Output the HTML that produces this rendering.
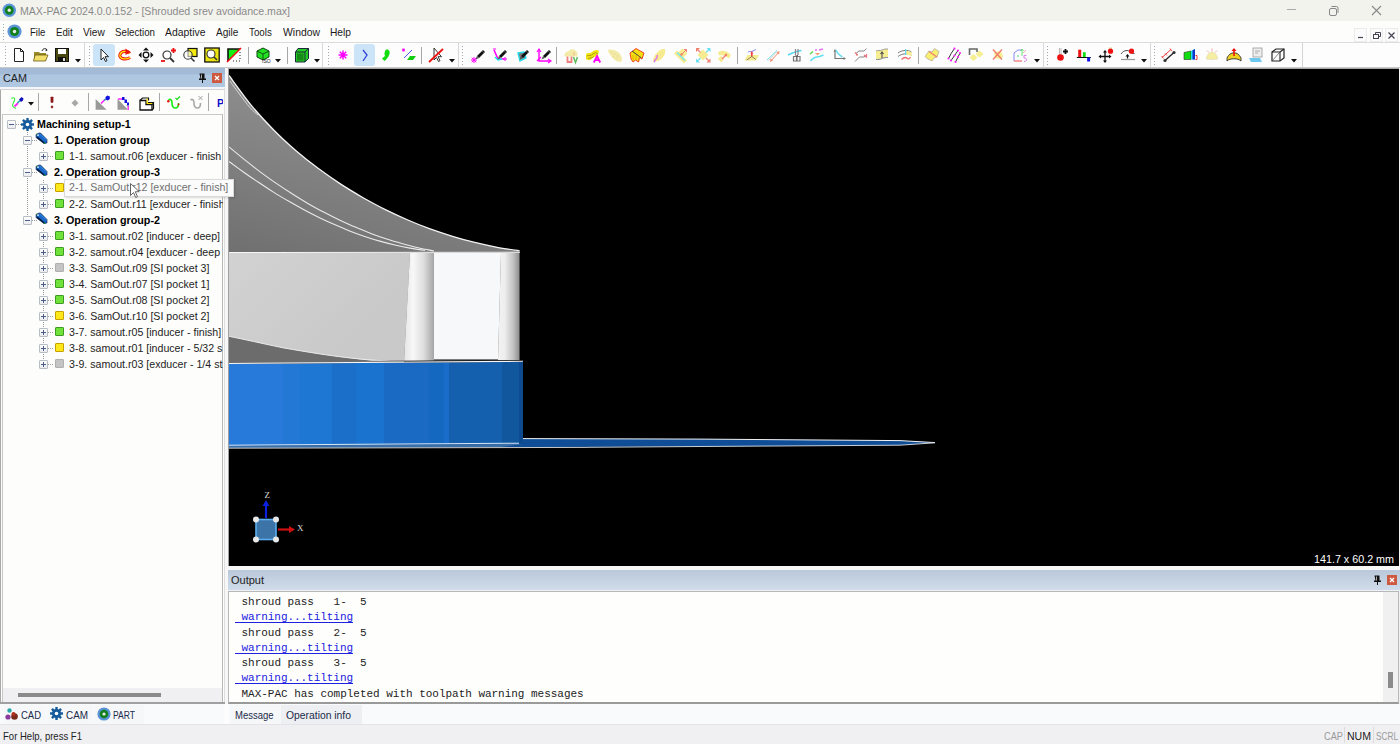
<!DOCTYPE html><html><head><meta charset="utf-8"><style>
*{margin:0;padding:0;box-sizing:border-box}
html,body{width:1400px;height:744px;overflow:hidden;background:#f0f0f2;font-family:"Liberation Sans",sans-serif;font-size:11px;color:#000}
.a{position:absolute}
.t{white-space:pre}
svg{position:absolute;overflow:visible}
</style></head><body>
<div class="a" style="left:0px;top:0px;width:1400px;height:21px;background:#f3f3ee"></div>
<svg style="left:1.5px;top:3px" width="14.5" height="14.5" viewBox="0 0 14 14"><circle cx="7" cy="7" r="6.5" fill="#5a93d8"/><circle cx="7" cy="7" r="4.3" fill="#12801e"/><circle cx="7" cy="7" r="1.6" fill="#e8e8e8"/></svg>
<div class="a t" style="left:20px;top:5.04px;font-size:11px;color:#8a8a8a;font-weight:normal;font-family:'Liberation Sans',sans-serif;letter-spacing:0.000px;line-height:normal;transform:scaleX(0.9607);transform-origin:0 0;">MAX-PAC&#32;2024.0.0.152&#32;-&#32;[Shrouded&#32;srev&#32;avoidance.max]</div>
<svg style="left:1284px;top:4px" width="14" height="14"><line x1="3" y1="5.5" x2="12" y2="5.5" stroke="#aaa" stroke-width="1"/></svg>
<svg style="left:1326px;top:4px" width="14" height="14"><rect x="3.5" y="4.5" width="7" height="7" rx="1.5" fill="none" stroke="#888" stroke-width="1"/><path d="M5.5 2.5h5a1.5 1.5 0 0 1 1.5 1.5v5" fill="none" stroke="#888" stroke-width="1"/></svg>
<svg style="left:1370px;top:4px" width="14" height="14"><path d="M2 2l9 9M11 2l-9 9" stroke="#888" stroke-width="1.1"/></svg>
<div class="a" style="left:0px;top:21px;width:1400px;height:21px;background:#fdfdfc"></div>
<div class="a" style="left:0px;top:42px;width:1400px;height:1px;background:#dcdcdc"></div>
<div class="a" style="left:3px;top:24px;width:1px;height:1px;background:#9aa"></div>
<div class="a" style="left:3px;top:27px;width:1px;height:1px;background:#9aa"></div>
<div class="a" style="left:3px;top:30px;width:1px;height:1px;background:#9aa"></div>
<div class="a" style="left:3px;top:33px;width:1px;height:1px;background:#9aa"></div>
<div class="a" style="left:3px;top:36px;width:1px;height:1px;background:#9aa"></div>
<div class="a" style="left:3px;top:39px;width:1px;height:1px;background:#9aa"></div>
<svg style="left:7px;top:24px" width="15" height="15" viewBox="0 0 14 14"><circle cx="7" cy="7" r="6.6" fill="#5a93d8"/><circle cx="7" cy="7" r="4.3" fill="#12801e"/><circle cx="7" cy="7" r="1.6" fill="#e8e8e8"/></svg>
<div class="a t" style="left:30px;top:26.05px;font-size:11px;color:#1a1a1a;font-weight:normal;font-family:'Liberation Sans',sans-serif;letter-spacing:0.000px;line-height:normal;transform:scaleX(0.8688);transform-origin:0 0;">File</div>
<div class="a t" style="left:55.7px;top:26.05px;font-size:11px;color:#1a1a1a;font-weight:normal;font-family:'Liberation Sans',sans-serif;letter-spacing:0.000px;line-height:normal;transform:scaleX(0.8811);transform-origin:0 0;">Edit</div>
<div class="a t" style="left:83.1px;top:26.05px;font-size:11px;color:#1a1a1a;font-weight:normal;font-family:'Liberation Sans',sans-serif;letter-spacing:0.000px;line-height:normal;transform:scaleX(0.9220);transform-origin:0 0;">View</div>
<div class="a t" style="left:115px;top:26.05px;font-size:11px;color:#1a1a1a;font-weight:normal;font-family:'Liberation Sans',sans-serif;letter-spacing:0.000px;line-height:normal;transform:scaleX(0.8839);transform-origin:0 0;">Selection</div>
<div class="a t" style="left:165.4px;top:26.05px;font-size:11px;color:#1a1a1a;font-weight:normal;font-family:'Liberation Sans',sans-serif;letter-spacing:0.000px;line-height:normal;transform:scaleX(0.9461);transform-origin:0 0;">Adaptive</div>
<div class="a t" style="left:216px;top:26.05px;font-size:11px;color:#1a1a1a;font-weight:normal;font-family:'Liberation Sans',sans-serif;letter-spacing:0.000px;line-height:normal;transform:scaleX(0.9158);transform-origin:0 0;">Agile</div>
<div class="a t" style="left:249px;top:26.05px;font-size:11px;color:#1a1a1a;font-weight:normal;font-family:'Liberation Sans',sans-serif;letter-spacing:0.000px;line-height:normal;transform:scaleX(0.8879);transform-origin:0 0;">Tools</div>
<div class="a t" style="left:283px;top:26.05px;font-size:11px;color:#1a1a1a;font-weight:normal;font-family:'Liberation Sans',sans-serif;letter-spacing:0.000px;line-height:normal;transform:scaleX(0.9457);transform-origin:0 0;">Window</div>
<div class="a t" style="left:330.3px;top:26.05px;font-size:11px;color:#1a1a1a;font-weight:normal;font-family:'Liberation Sans',sans-serif;letter-spacing:0.000px;line-height:normal;transform:scaleX(0.9283);transform-origin:0 0;">Help</div>
<div class="a" style="left:1354px;top:28px;width:13px;height:14px;background:#fbfbfb;border:1px solid #ececec"></div>
<div class="a" style="left:1370px;top:28px;width:13px;height:14px;background:#fbfbfb;border:1px solid #ececec"></div>
<div class="a" style="left:1385px;top:28px;width:13px;height:14px;background:#fbfbfb;border:1px solid #ececec"></div>
<svg style="left:1354px;top:28px" width="13" height="14"><line x1="4" y1="9.5" x2="9" y2="9.5" stroke="#445" stroke-width="1.2"/></svg>
<svg style="left:1370px;top:28px" width="13" height="14"><rect x="3.5" y="6.5" width="5" height="4" fill="none" stroke="#445"/><path d="M5.5 6.5v-2h5v4h-2" fill="none" stroke="#445"/></svg>
<svg style="left:1385px;top:28px" width="13" height="14"><path d="M3.5 4.5l6 6M9.5 4.5l-6 6" stroke="#445" stroke-width="1.2"/></svg>
<div class="a" style="left:0px;top:43px;width:1400px;height:25px;background:#fdfdfd"></div>
<div class="a" style="left:0px;top:67px;width:1400px;height:1px;background:#c8c8c8"></div>
<div class="a" style="left:5px;top:46px;width:1px;height:1px;background:#a0a8b0"></div><div class="a" style="left:5px;top:49px;width:1px;height:1px;background:#a0a8b0"></div><div class="a" style="left:5px;top:52px;width:1px;height:1px;background:#a0a8b0"></div><div class="a" style="left:5px;top:55px;width:1px;height:1px;background:#a0a8b0"></div><div class="a" style="left:5px;top:58px;width:1px;height:1px;background:#a0a8b0"></div><div class="a" style="left:5px;top:61px;width:1px;height:1px;background:#a0a8b0"></div><div class="a" style="left:5px;top:64px;width:1px;height:1px;background:#a0a8b0"></div><div class="a" style="left:84px;top:43px;width:1px;height:24px;background:#d8d8d8"></div><div class="a" style="left:89px;top:46px;width:1px;height:1px;background:#a0a8b0"></div><div class="a" style="left:89px;top:49px;width:1px;height:1px;background:#a0a8b0"></div><div class="a" style="left:89px;top:52px;width:1px;height:1px;background:#a0a8b0"></div><div class="a" style="left:89px;top:55px;width:1px;height:1px;background:#a0a8b0"></div><div class="a" style="left:89px;top:58px;width:1px;height:1px;background:#a0a8b0"></div><div class="a" style="left:89px;top:61px;width:1px;height:1px;background:#a0a8b0"></div><div class="a" style="left:89px;top:64px;width:1px;height:1px;background:#a0a8b0"></div><div class="a" style="left:92.5px;top:44px;width:22.5px;height:22px;background:#cce4f7;border-radius:3px"></div><div class="a" style="left:354px;top:44px;width:21px;height:22px;background:#cce4f7;border-radius:3px"></div><div class="a" style="left:247.5px;top:47px;width:1px;height:17px;background:#a6a6a6"></div><div class="a" style="left:287px;top:47px;width:1px;height:17px;background:#a6a6a6"></div><div class="a" style="left:322px;top:43px;width:1px;height:24px;background:#d8d8d8"></div><div class="a" style="left:328px;top:46px;width:1px;height:1px;background:#a0a8b0"></div><div class="a" style="left:328px;top:49px;width:1px;height:1px;background:#a0a8b0"></div><div class="a" style="left:328px;top:52px;width:1px;height:1px;background:#a0a8b0"></div><div class="a" style="left:328px;top:55px;width:1px;height:1px;background:#a0a8b0"></div><div class="a" style="left:328px;top:58px;width:1px;height:1px;background:#a0a8b0"></div><div class="a" style="left:328px;top:61px;width:1px;height:1px;background:#a0a8b0"></div><div class="a" style="left:328px;top:64px;width:1px;height:1px;background:#a0a8b0"></div><div class="a" style="left:421px;top:47px;width:1px;height:17px;background:#a6a6a6"></div><div class="a" style="left:458px;top:43px;width:1px;height:24px;background:#d8d8d8"></div><div class="a" style="left:462px;top:46px;width:1px;height:1px;background:#a0a8b0"></div><div class="a" style="left:462px;top:49px;width:1px;height:1px;background:#a0a8b0"></div><div class="a" style="left:462px;top:52px;width:1px;height:1px;background:#a0a8b0"></div><div class="a" style="left:462px;top:55px;width:1px;height:1px;background:#a0a8b0"></div><div class="a" style="left:462px;top:58px;width:1px;height:1px;background:#a0a8b0"></div><div class="a" style="left:462px;top:61px;width:1px;height:1px;background:#a0a8b0"></div><div class="a" style="left:462px;top:64px;width:1px;height:1px;background:#a0a8b0"></div><div class="a" style="left:556px;top:47px;width:1px;height:17px;background:#a6a6a6"></div><div class="a" style="left:737px;top:47px;width:1px;height:17px;background:#a6a6a6"></div><div class="a" style="left:917.5px;top:47px;width:1px;height:17px;background:#a6a6a6"></div><div class="a" style="left:1043px;top:43px;width:1px;height:24px;background:#d8d8d8"></div><div class="a" style="left:1047px;top:46px;width:1px;height:1px;background:#a0a8b0"></div><div class="a" style="left:1047px;top:49px;width:1px;height:1px;background:#a0a8b0"></div><div class="a" style="left:1047px;top:52px;width:1px;height:1px;background:#a0a8b0"></div><div class="a" style="left:1047px;top:55px;width:1px;height:1px;background:#a0a8b0"></div><div class="a" style="left:1047px;top:58px;width:1px;height:1px;background:#a0a8b0"></div><div class="a" style="left:1047px;top:61px;width:1px;height:1px;background:#a0a8b0"></div><div class="a" style="left:1047px;top:64px;width:1px;height:1px;background:#a0a8b0"></div><div class="a" style="left:1150px;top:43px;width:1px;height:24px;background:#d8d8d8"></div><div class="a" style="left:1154px;top:46px;width:1px;height:1px;background:#a0a8b0"></div><div class="a" style="left:1154px;top:49px;width:1px;height:1px;background:#a0a8b0"></div><div class="a" style="left:1154px;top:52px;width:1px;height:1px;background:#a0a8b0"></div><div class="a" style="left:1154px;top:55px;width:1px;height:1px;background:#a0a8b0"></div><div class="a" style="left:1154px;top:58px;width:1px;height:1px;background:#a0a8b0"></div><div class="a" style="left:1154px;top:61px;width:1px;height:1px;background:#a0a8b0"></div><div class="a" style="left:1154px;top:64px;width:1px;height:1px;background:#a0a8b0"></div><div class="a" style="left:1302px;top:43px;width:1px;height:24px;background:#d4d4d4"></div><svg style="left:75px;top:59px" width="6" height="4"><path d="M0 0h6l-3 3.5z" fill="#111"/></svg><svg style="left:275px;top:59px" width="6" height="4"><path d="M0 0h6l-3 3.5z" fill="#111"/></svg><svg style="left:314px;top:59px" width="6" height="4"><path d="M0 0h6l-3 3.5z" fill="#111"/></svg><svg style="left:449px;top:59px" width="6" height="4"><path d="M0 0h6l-3 3.5z" fill="#111"/></svg><svg style="left:1034px;top:59px" width="6" height="4"><path d="M0 0h6l-3 3.5z" fill="#111"/></svg><svg style="left:1141px;top:59px" width="6" height="4"><path d="M0 0h6l-3 3.5z" fill="#111"/></svg><svg style="left:1291px;top:59px" width="6" height="4"><path d="M0 0h6l-3 3.5z" fill="#111"/></svg><svg style="left:11.0px;top:47.0px" width="16" height="16" viewBox="0 0 16 16"><path d="M3.5 1.5h6l3 3v10h-9z" fill="#fff" stroke="#222" stroke-width="1"/><path d="M9.5 1.5v3h3" fill="none" stroke="#222"/></svg><svg style="left:32.5px;top:47.0px" width="16" height="16" viewBox="0 0 16 16"><path d="M1 5h5l1 1h6v8H1z" fill="#9a8a2a"/><path d="M2 8h13l-2.5 6H0.5z" fill="#f2de6a" stroke="#6a5a10" stroke-width="0.8"/><path d="M9 4c1-3 4-3 5-1" fill="none" stroke="#222" stroke-width="1"/><path d="M13 1.5l1.5 2-2 0.8z" fill="#222"/></svg><svg style="left:54.0px;top:47.0px" width="16" height="16" viewBox="0 0 16 16"><rect x="1.5" y="1.5" width="13" height="13" fill="#4a4a10" stroke="#111"/><rect x="4" y="2" width="8" height="5" fill="#fff"/><rect x="4" y="10" width="8" height="4.5" fill="#111"/><rect x="9" y="11" width="2" height="3" fill="#ddd"/></svg><svg style="left:96.0px;top:47.0px" width="16" height="16" viewBox="0 0 16 16"><path d="M5 2v11l2.5-2.5 2 4 1.5-0.8-2-4h3.5z" fill="#fff" stroke="#222" stroke-width="1"/></svg><svg style="left:117.0px;top:47.0px" width="16" height="16" viewBox="0 0 16 16"><path d="M12.5 6.5C11 3.5 4.5 3.5 3 7.5S8.5 13.5 13 10.5" fill="none" stroke="#ee1111" stroke-width="3.2"/><path d="M12.5 6.5C11 3.5 4.5 3.5 3 7.5S8.5 13.5 13 10.5" fill="none" stroke="#ffee00" stroke-width="1.2"/><path d="M8.5 1.5l5 3.5-5 3z" fill="#ee1111"/></svg><svg style="left:138.0px;top:47.0px" width="16" height="16" viewBox="0 0 16 16"><path d="M8 0.5l3 3h-6zM8 15.5l3-3h-6zM0.5 8l3-3v6zM15.5 8l-3-3v6z" fill="#111"/><circle cx="8" cy="8" r="2.8" fill="#fff" stroke="#111" stroke-width="1.3"/></svg><svg style="left:160.0px;top:47.0px" width="16" height="16" viewBox="0 0 16 16"><circle cx="7" cy="8" r="4" fill="#fff" stroke="#333" stroke-width="1.2"/><path d="M10 11l4 4" stroke="#333" stroke-width="1.8"/><path d="M11 3.5h5M13.5 1v5" stroke="#e11" stroke-width="1.8"/><path d="M1 14h4" stroke="#e11" stroke-width="1.8"/></svg><svg style="left:182.0px;top:47.0px" width="16" height="16" viewBox="0 0 16 16"><rect x="6" y="1.5" width="9" height="8" fill="#f2ea10" stroke="#111" stroke-width="1.2"/><circle cx="6" cy="8" r="4.2" fill="#fff" fill-opacity="0.6" stroke="#333" stroke-width="1.1"/><path d="M9 11l3.5 3.5" stroke="#333" stroke-width="1.6"/></svg><svg style="left:204.0px;top:47.0px" width="16" height="16" viewBox="0 0 16 16"><rect x="0.8" y="1" width="14.4" height="14" fill="#ece410" stroke="#111" stroke-width="1.3"/><circle cx="7" cy="7" r="4" fill="#fff" stroke="#333" stroke-width="1.1"/><path d="M10 10l3 3" stroke="#333" stroke-width="1.6"/></svg><svg style="left:226.0px;top:47.0px" width="16" height="16" viewBox="0 0 16 16"><path d="M2 2h12L2 14z" fill="#11ee11"/><path d="M2 14V2h12" fill="none" stroke="#111" stroke-width="1.6"/><path d="M1 15L15 1" stroke="#ee1111" stroke-width="1.6"/><path d="M14 5v9H5" fill="none" stroke="#222" stroke-width="1" stroke-dasharray="1 2"/></svg><svg style="left:255.0px;top:47.0px" width="16" height="16" viewBox="0 0 16 16"><path d="M8 1l6 3v6l-6 3-6-3V4z" fill="#22e022" stroke="#114411" stroke-width="1"/><path d="M2 4l6 3 6-3M8 7v6" fill="none" stroke="#114411" stroke-width="0.9"/><text x="7" y="16" font-size="5" font-family="Liberation Sans" fill="#222">ISO</text></svg><svg style="left:294.0px;top:47.0px" width="16" height="16" viewBox="0 0 16 16"><path d="M4 1.5h10.5v10l-3.5 3.5H1.5V5z" fill="#22cc22" stroke="#1a2a3a" stroke-width="1"/><path d="M1.5 5h9.5v10M11 5l3.5-3.5" fill="none" stroke="#1a2a3a" stroke-width="1"/><rect x="3" y="6.5" width="6.5" height="7" fill="#188a18"/></svg><svg style="left:334.5px;top:47.0px" width="16" height="16" viewBox="0 0 16 16"><path d="M8 3.5v9M3.5 8h9M4.8 4.8l6.4 6.4M11.2 4.8l-6.4 6.4" stroke="#f0f" stroke-width="1.5"/></svg><svg style="left:357.0px;top:47.0px" width="16" height="16" viewBox="0 0 16 16"><path d="M6 3l4 5-4 6" fill="none" stroke="#3344dd" stroke-width="1.3"/></svg><svg style="left:377.5px;top:47.0px" width="16" height="16" viewBox="0 0 16 16"><path d="M8 2.5c2.5-0.5 4.5 1.5 3.5 4.5s-3 5.5-5 7l-2.5-2.5c1-1 2-1.5 3-2.5-1-1.5-0.5-5 1-6.5z" fill="#11dd11"/></svg><svg style="left:400.0px;top:47.0px" width="16" height="16" viewBox="0 0 16 16"><path d="M2 3h3M3.5 1.5v3M2 1.8l3 2.4M5 1.8l-3 2.4" stroke="#f0f" stroke-width="0.9"/><path d="M4 11L12 3" stroke="#4455ee" stroke-width="1"/><path d="M7 13l3-4h6l-3 4z" fill="#11cc11"/></svg><svg style="left:428.0px;top:47.0px" width="16" height="16" viewBox="0 0 16 16"><path d="M6 1v12l2.5-2.5 2 4 1.5-0.8-2-4h3.5z" fill="#fff" stroke="#333" stroke-width="1"/><path d="M1 15L15 2" stroke="#ee1111" stroke-width="1.8"/></svg><svg style="left:470.0px;top:47.0px" width="16" height="16" viewBox="0 0 16 16"><path d="M1 13h6M4 10v6M1.8 10.8l4.4 4.4M6.2 10.8l-4.4 4.4" stroke="#f0f" stroke-width="1"/><path d="M7 9l6-6 2 2-6 6z" fill="#111"/><path d="M7 9l-1.5 3.5L9 11z" fill="#555"/><path d="M12 4l2 2" stroke="#777" stroke-width="0.6"/></svg><svg style="left:492.0px;top:47.0px" width="16" height="16" viewBox="0 0 16 16"><path d="M2 3l4 9h6" fill="none" stroke="#f0f" stroke-width="1.6"/><path d="M3 10l3 3 4-1" fill="none" stroke="#1ee" stroke-width="1.4"/><path d="M1 2h3M11 12h4M13 10v4" stroke="#f0f" stroke-width="1"/><path d="M7 9l6-6 2 2-6 6z" fill="#111"/><path d="M7 9l-1.5 3.5L9 11z" fill="#555"/><path d="M12 4l2 2" stroke="#777" stroke-width="0.6"/></svg><svg style="left:513.5px;top:47.0px" width="16" height="16" viewBox="0 0 16 16"><path d="M4 6l6-1 2 6-6 3z" fill="#7a7a7a" stroke="#22dded" stroke-width="1.4"/><path d="M7 9l6-6 2 2-6 6z" fill="#111"/><path d="M7 9l-1.5 3.5L9 11z" fill="#555"/><path d="M12 4l2 2" stroke="#777" stroke-width="0.6"/></svg><svg style="left:536.0px;top:47.0px" width="16" height="16" viewBox="0 0 16 16"><path d="M3 3v11h11" fill="none" stroke="#f0f" stroke-width="1.4"/><path d="M1 5l2-3 2 3M12 12l3 2-3 2M1 14l4-4" fill="none" stroke="#f0f" stroke-width="1.2"/><path d="M7 9l6-6 2 2-6 6z" fill="#111"/><path d="M7 9l-1.5 3.5L9 11z" fill="#555"/><path d="M12 4l2 2" stroke="#777" stroke-width="0.6"/></svg><svg style="left:562.5px;top:47.0px" width="16" height="16" viewBox="0 0 16 16"><path d="M1.5 9.5c-0.5-3 1.5-5 4-5 1-2.5 5-3 7-1 2 1 2.5 4 1.5 6z" fill="#f4eaa8"/><path d="M10 5.5l2 1.5-2 1.5" fill="none" stroke="#f0a090" stroke-width="0.7"/><path d="M4.5 9.5v5.5h4v-5.5" fill="none" stroke="#f08080" stroke-width="1.8"/><path d="M10.5 10l2 5.5 2-5.5" fill="none" stroke="#60c060" stroke-width="1.5"/></svg><svg style="left:584.5px;top:47.0px" width="16" height="16" viewBox="0 0 16 16"><path d="M1 7c2-2 4 0 6-2s5-3 7-1l-1.5 6c-2-1-4 0-6 2s-4 1-5.5 0z" fill="#f2e414"/><path d="M2 9c2-1 4 0 6-2s4-1 5 0M3 11.5c2-1 4 0 6-2" fill="none" stroke="#8a7a10" stroke-width="0.7"/><path d="M8.8 15.5l3.2-6.5 3.2 6.5M10.2 13.2h3.6" fill="none" stroke="#f0f" stroke-width="1.8"/></svg><svg style="left:606.5px;top:47.0px" width="16" height="16" viewBox="0 0 16 16"><path d="M1 3c3-1 7 0 10 2s4 5 4 8l-1 2c-4 0-8-3-10-6S1 5 1 3z" fill="#f4eaa8"/><path d="M4 5l1 1M7 6l1 2M10 8l1 2M6 9l1 1M9 11l1 1" stroke="#e2d690" stroke-width="0.9"/></svg><svg style="left:628.5px;top:47.0px" width="16" height="16" viewBox="0 0 16 16"><path d="M1 6L7 1.5L15 6L13 12L10.5 10.5L9.5 15L6.5 13L4 15L2 12Z" fill="#f4de10" stroke="#ee3020" stroke-width="0.9"/><path d="M3 4l9.5 7" stroke="#444" stroke-width="1"/><path d="M4 8v6M7 8v5M10 9v5" stroke="#e0a010" stroke-width="0.8"/></svg><svg style="left:650.5px;top:47.0px" width="16" height="16" viewBox="0 0 16 16"><path d="M2 14.5c0-5 4-10 9-12.5h3c1 4-1 9-6 11.5l-5 1.5z" fill="#f6eb90"/><path d="M6.5 8c-1 2 0 3-1.5 4s-1 2-2 3" fill="none" stroke="#e070f0" stroke-width="1.4"/></svg><svg style="left:672.5px;top:47.0px" width="16" height="16" viewBox="0 0 16 16"><path d="M1 6.5l3-3 10 10-3 3z" fill="#f6eb90"/><path d="M9.5 1.5l5 5-4.5 4-5-5z" fill="#f6eb90"/><path d="M4 5.5l8 8" stroke="#6ee8f0" stroke-width="1.3"/><path d="M8.5 7.5l5-5M11 2.5h2.5v2.5" fill="none" stroke="#f08070" stroke-width="1"/><circle cx="8.5" cy="7.5" r="1.2" fill="#f08060"/></svg><svg style="left:694.5px;top:47.0px" width="16" height="16" viewBox="0 0 16 16"><path d="M8 2.5l5.5 5.5-5.5 5.5-5.5-5.5z" fill="#f6eb90"/><path d="M2 2l3.5 3.5M14.5 14.5L11 11" stroke="#f08070" stroke-width="1.2"/><path d="M1 1h4l-4 4zM15.5 15.5h-4l4-4z" fill="#f08070"/><path d="M14.5 2L11 5.5M2 14.5L5.5 11" stroke="#6ee0f0" stroke-width="1.2"/><path d="M15.5 1h-4l4 4zM1 15.5h4l-4-4z" fill="#6ee0f0"/></svg><svg style="left:716.5px;top:47.0px" width="16" height="16" viewBox="0 0 16 16"><path d="M1 5.5c3-3 9-2.5 13 2.5l-2 3.5c-3-3-7-4-10-3z" fill="#f6eb90"/><path d="M1 11.5l3-2.5 3 3-3 3.5z" fill="#f6eb90"/><path d="M5 12l4-4" stroke="#f08070" stroke-width="1.4"/><circle cx="9" cy="8" r="1.3" fill="#f08070"/></svg><svg style="left:742.5px;top:47.0px" width="16" height="16" viewBox="0 0 16 16"><path d="M1.5 13.5l3-5.5h11.5l-3 5.5z" fill="#f4ec90"/><path d="M5 5c2-1 3 0 5-1s2-1 3-1.5" fill="none" stroke="#8080f0" stroke-width="1"/><path d="M8.8 9.5V6" stroke="#f04040" stroke-width="1.6"/><path d="M7.3 6.5l1.5-2.5 1.5 2.5z" fill="#f04040"/><path d="M8.8 9.5l-5 3.5M8.8 9.5l4 3" stroke="#806050" stroke-width="0.8"/></svg><svg style="left:765.0px;top:47.0px" width="16" height="16" viewBox="0 0 16 16"><path d="M2 13L12 3.5" stroke="#70e0f0" stroke-width="1"/><path d="M3.5 13.5l9-9.5" stroke="#c8c8c8" stroke-width="0.8"/><path d="M6 14L13.8 5.2" stroke="#f09070" stroke-width="1"/><path d="M14.5 4l-0.5 3.5-2.5-2z" fill="#f09070"/><path d="M5 15l0.5-3.5 2.5 2z" fill="#f09070"/></svg><svg style="left:787.0px;top:47.0px" width="16" height="16" viewBox="0 0 16 16"><path d="M1 8c4-2 8-4 13.5-4.5" fill="none" stroke="#50d8f0" stroke-width="1.5"/><path d="M8.5 2v6M11 2v6" stroke="#888" stroke-width="1.2"/><path d="M6.5 9.5h3v4.5h-3zM10 9.5h3v4.5h-3z" fill="none" stroke="#777" stroke-width="1.2"/><path d="M8.5 8l2 2M11 8l-2 2" stroke="#555" stroke-width="1"/></svg><svg style="left:809.0px;top:47.0px" width="16" height="16" viewBox="0 0 16 16"><path d="M1.5 14c2-2 3-4 6-4s5-1 7-2" fill="none" stroke="#60e0f0" stroke-width="1.6"/><path d="M1 7l3-2.5" stroke="#50d850" stroke-width="1.4"/><path d="M6 3h2M10 3l4-1" stroke="#e070f0" stroke-width="1.5"/><path d="M6 6h5l-2.5 2.5z" fill="#f0a070"/></svg><svg style="left:831.0px;top:47.0px" width="16" height="16" viewBox="0 0 16 16"><path d="M4 3v8.5h9.5" fill="none" stroke="#777" stroke-width="1.2"/><path d="M2.5 4.5L4 2l1.5 2.5zM12.5 10l2.5 1.5-2.5 1.5z" fill="#777"/><path d="M5 3c1 3 3 5 6.5 7" fill="none" stroke="#70e0f0" stroke-width="1.6"/></svg><svg style="left:853.0px;top:47.0px" width="16" height="16" viewBox="0 0 16 16"><path d="M3 6.5L6 4h5l2.5-2.5M2 14.5L6.5 10h4.5l2-1.5" fill="none" stroke="#777" stroke-width="0.9"/><path d="M2 5.5l2.5 2.5M3 8h2" stroke="#f07070" stroke-width="1.2"/><path d="M11 8l3 2.5M13.5 7v3.5" stroke="#f07080" stroke-width="1.2"/></svg><svg style="left:875.0px;top:47.0px" width="16" height="16" viewBox="0 0 16 16"><path d="M1 4c2-1 4 0 6-1s4-1 6-1v9c-2 0-4 0-6 1s-4 1-6 1z" fill="#f6ee90"/><path d="M1 4c2-1 4 0 6-1s4-1 6-1" fill="none" stroke="#888" stroke-width="0.8"/><path d="M1 12.5c2 0 4 0 6-1s4-1 6-1" fill="none" stroke="#6a70a0" stroke-width="0.8"/><path d="M7 11V5.5M5.5 7L7 5l1.5 2" fill="none" stroke="#555" stroke-width="1.1"/></svg><svg style="left:897.0px;top:47.0px" width="16" height="16" viewBox="0 0 16 16"><path d="M1 6c4-3 10-3.5 13.5-1M1 9.5c4-3 9-3.5 13.5-1.5" fill="none" stroke="#666" stroke-width="0.9"/><path d="M9 3.5l5.5 1.5v4L9 7.5z" fill="#f6ee90"/><path d="M8.7 2v6" stroke="#60d8f0" stroke-width="1.2"/><path d="M4.5 12.5c2-2 4-3 6-1 1 1 2 0 3-1.5" fill="none" stroke="#f07070" stroke-width="1.3"/></svg><svg style="left:924.0px;top:47.0px" width="16" height="16" viewBox="0 0 16 16"><path d="M1 9.5l4-5.5 3 1 2.5-3.5 4.5 3-2 5.5-3 1-2 3-4-2z" fill="#f8ee70" stroke="#999" stroke-width="0.6"/><path d="M5 4.5l8 5.5" stroke="#f08070" stroke-width="1.3"/></svg><svg style="left:947.0px;top:47.0px" width="16" height="16" viewBox="0 0 16 16"><path d="M1.5 11.5Q4 6 7.5 1.5M4 13.5Q8 8 11 3.5M8.5 15Q10.5 11 13 6" fill="none" stroke="#333" stroke-width="1"/><g fill="#ff22ff"><circle cx="1.5" cy="11.5" r="1.1"/><circle cx="7.5" cy="1.5" r="1.1"/><circle cx="4" cy="13.5" r="1.1"/><circle cx="7.5" cy="8.5" r="1.1"/><circle cx="11" cy="3.5" r="1.1"/><circle cx="8.5" cy="15" r="1.1"/><circle cx="11" cy="10" r="1.1"/><circle cx="13" cy="6" r="1.1"/></g></svg><svg style="left:968.0px;top:47.0px" width="16" height="16" viewBox="0 0 16 16"><path d="M1.5 8V2h7.5v3" fill="none" stroke="#666" stroke-width="1.6"/><path d="M5.5 7l4 3.5-4 3.5-4-3.5zM11.5 3.5l4 3.5-4 3.5-4-3.5z" fill="#f6ee90"/></svg><svg style="left:990.0px;top:47.0px" width="16" height="16" viewBox="0 0 16 16"><path d="M4 6l4-2 4 2 1 4-4 2-4-1z" fill="#f6ee90"/><path d="M3 2.5l9 10M12 2.5l-9 10" stroke="#f08070" stroke-width="1.5"/></svg><svg style="left:1012.0px;top:47.0px" width="16" height="16" viewBox="0 0 16 16"><path d="M2 14V6l4-3h4" fill="none" stroke="#8888f0" stroke-width="1"/><path d="M2 14h8" stroke="#f08080" stroke-width="1.4"/><path d="M10 9V2.5M8.5 4l1.5-2 1.5 2" fill="none" stroke="#70e080" stroke-width="1"/><path d="M14.5 8.5h-2.5v2.5c1.5 0 2.5 0 2.5 1.5s-1 2-2.5 2" fill="none" stroke="#e080f0" stroke-width="1"/><path d="M11 6l3-3" stroke="#f0a090" stroke-width="0.8"/><circle cx="6" cy="9" r="1" fill="#80e0a0"/></svg><svg style="left:1054.0px;top:47.0px" width="16" height="16" viewBox="0 0 16 16"><path d="M5.5 1v8M7 1v8" stroke="#aaa" stroke-width="0.8"/><circle cx="6.5" cy="10.5" r="3.3" fill="#ee1111"/><path d="M9 4.5h5M11.5 2v5" stroke="#111" stroke-width="1.8"/></svg><svg style="left:1076.0px;top:47.0px" width="16" height="16" viewBox="0 0 16 16"><rect x="2.2" y="2.7" width="3" height="7.8" fill="#ee1111"/><rect x="6.9" y="5.2" width="2.8" height="5.3" fill="#11dd11"/><path d="M0.8 10.5h14" stroke="#111" stroke-width="1"/><rect x="11.1" y="10.5" width="3" height="4" fill="#1111ee"/></svg><svg style="left:1098.0px;top:47.0px" width="16" height="16" viewBox="0 0 16 16"><path d="M7 4.5v9.5M2 9.5h10" stroke="#111" stroke-width="1.3"/><path d="M5 5.5L7 3l2 2.5zM5 13.5L7 16l2-2.5zM3 7.5L0.5 9.5 3 11.5zM11 7.5l2.5 2-2.5 2z" fill="#111"/><circle cx="12.5" cy="4.2" r="2.6" fill="#ee1111"/><path d="M11.5 0.5v1.5M13.5 0.5v1.5" stroke="#c8a040" stroke-width="0.6"/></svg><svg style="left:1120.0px;top:47.0px" width="16" height="16" viewBox="0 0 16 16"><path d="M1 7c1.5-2 3-3.5 6-3.5s2.5 3 7.5 3" fill="none" stroke="#555" stroke-width="1"/><path d="M1 12.5h14" stroke="#999" stroke-width="1.2"/><path d="M7.5 11.5V8.5" stroke="#111" stroke-width="1.2"/><path d="M5.5 9.5l2-2.5 2 2.5z" fill="#111"/><circle cx="11.5" cy="4.2" r="2.6" fill="#ee1111"/></svg><svg style="left:1160.0px;top:47.0px" width="16" height="16" viewBox="0 0 16 16"><path d="M5 13.5L14 5.5" stroke="#222" stroke-width="1.3"/><circle cx="5" cy="13.5" r="1.6" fill="#333"/><circle cx="14" cy="5.5" r="1.6" fill="#333"/><path d="M2 10.5L11 2.5" stroke="#ee2222" stroke-width="0.9"/><path d="M1.5 9l2 2.5M10 1.5l2 2.5M5 6.5l2 2" stroke="#ee2222" stroke-width="0.8"/></svg><svg style="left:1182.0px;top:47.0px" width="16" height="16" viewBox="0 0 16 16"><path d="M2 5.5l7-1.5v8.5H2z" fill="#11dd11" stroke="#333" stroke-width="0.6"/><path d="M9 4l4-2v10.5H9z" fill="#22ddee"/><path d="M10.5 3.3l2.5-1.3v10.5h-2.5z" fill="#1133cc"/><path d="M13.5 8.5h1.5v4h-1.5" fill="none" stroke="#ee2222" stroke-width="0.9"/></svg><svg style="left:1204.0px;top:47.0px" width="16" height="16" viewBox="0 0 16 16"><path d="M2.5 12c0-4 2.5-6.5 5.5-6.5s5.5 2.5 5.5 6.5c-2 0.5-9 0.5-11 0z" fill="#f6eea0" stroke="#d8d0a0" stroke-width="0.5"/><path d="M8 1.5v3M3 3.5l2 2M13 3.5l-2 2" stroke="#f0a090" stroke-width="0.9"/></svg><svg style="left:1226.0px;top:47.0px" width="16" height="16" viewBox="0 0 16 16"><path d="M1 11c3-7 11-7 14 0v3c-3-3-11-3-14 0z" fill="#f0d020" stroke="#333" stroke-width="0.9"/><path d="M8 9V2" stroke="#ee1111" stroke-width="1.6"/><path d="M5.5 4L8 1l2.5 3z" fill="#ee1111"/></svg><svg style="left:1248.0px;top:47.0px" width="16" height="16" viewBox="0 0 16 16"><rect x="5" y="1" width="9" height="9" fill="#eee" stroke="#999" stroke-width="0.8"/><path d="M7 4h5M7 6h3" stroke="#999" stroke-width="0.8"/><path d="M1 11h11l2 4H3z" fill="#6cc8ee"/></svg><svg style="left:1270.0px;top:47.0px" width="16" height="16" viewBox="0 0 16 16"><path d="M2 5l4-3h8v9l-4 3H2z" fill="#fff" stroke="#222" stroke-width="1.2"/><path d="M2 5h8v9M10 5l4-3" fill="none" stroke="#222" stroke-width="1.1"/><path d="M3 13l6-7" stroke="#888" stroke-width="1"/></svg>
<div class="a" style="left:0px;top:68px;width:225px;height:636px;background:#fdfdfb"></div>
<div class="a" style="left:225px;top:68px;width:4px;height:636px;background:#f7f7f7"></div>
<div class="a" style="left:0px;top:68px;width:225px;height:19px;background:linear-gradient(#a4bbd8 0,#a4bbd8 6px,#b0c7e2 7px,#b0c7e2 100%)"></div>
<div class="a t" style="left:3px;top:71.55px;font-size:11px;color:#222;font-weight:normal;font-family:'Liberation Sans',sans-serif;letter-spacing:0.000px;line-height:normal;transform:scaleX(0.9818);transform-origin:0 0;">CAM</div>
<svg style="left:197px;top:72px" width="10" height="12"><path d="M2.5 1.5h5v5h1.5v1.5h-3v3h-1v-3h-3v-1.5h1.5z" fill="#111"/><rect x="4" y="2.5" width="1" height="4" fill="#aaa"/></svg>
<div class="a" style="left:212px;top:73px;width:10px;height:10px;background:#cd5a40"></div>
<svg style="left:212px;top:73px" width="10" height="10"><path d="M3 3l4 4M7 3l-4 4" stroke="#fff" stroke-width="1.3"/></svg>
<div class="a" style="left:0px;top:87px;width:225px;height:1px;background:#eef2f8"></div>
<div class="a" style="left:0px;top:88px;width:1px;height:616px;background:#a8a8a8"></div>
<div class="a" style="left:0px;top:87px;width:225px;height:2px;background:#f4f6fa"></div>
<div class="a" style="left:0px;top:89px;width:225px;height:1px;background:#d4d4d4"></div>
<svg style="left:8.5px;top:95.0px" width="16" height="16" viewBox="0 0 16 16"><path d="M2.5 3.5c2-1.5 4-0.5 3 2s-3 4-1.5 6 3 1.5 3 1.5" fill="none" stroke="#33ee33" stroke-width="1.1"/><path d="M5.5 11.5l3.5-3.5" stroke="#ff22ff" stroke-width="1.8"/><path d="M8.5 8l2.5-2.5" stroke="#22aaaa" stroke-width="1.6"/><path d="M10 4.5l2.5-2.5 2 1.5-0.5 2-2 1.5z" fill="#1111bb"/></svg><svg style="left:44.0px;top:95.0px" width="16" height="16" viewBox="0 0 16 16"><rect x="6.6" y="1.7" width="2.8" height="6" rx="0.6" fill="#8a1a1a"/><path d="M8 10.5v2.5" stroke="#aa6666" stroke-width="0.8"/><path d="M6.5 12l1.5-1.5 1.5 1.5-1.5 1.5z" fill="#8a1a1a"/></svg><svg style="left:67.0px;top:95.0px" width="16" height="16" viewBox="0 0 16 16"><path d="M8 4.5l3.5 3.5-3.5 3.5-3.5-3.5z" fill="#a8a8a8"/></svg><svg style="left:94.5px;top:95.0px" width="16" height="16" viewBox="0 0 16 16"><path d="M0.6 4v10.7h11z" fill="#9a9a9a"/><path d="M6 8.5l4-4" stroke="#ff22ff" stroke-width="1.6"/><path d="M9 5.5l1.5-1.5" stroke="#22aaaa" stroke-width="1.4"/><path d="M10.5 2l2-1.5 2.3 1 0 2.5-2 1.5-2.3-1z" fill="#1111dd"/></svg><svg style="left:115.5px;top:95.0px" width="16" height="16" viewBox="0 0 16 16"><path d="M1.5 4v10.7h10.7z" fill="#9a9a9a"/><path d="M2 4h4M12.2 11v4" stroke="#ff22ff" stroke-width="1.4"/><path d="M6 2h2.5v2.5h2.5v3h2v3h-2v-2.5h-2.5v-3H6z" fill="#1111dd"/><path d="M11 10.5l1 1" stroke="#11aa11" stroke-width="0.8"/></svg><svg style="left:138.5px;top:95.0px" width="16" height="16" viewBox="0 0 16 16"><path d="M1 5.5h6v4h6v5.5H1z" fill="#fff" stroke="#111" stroke-width="1.3"/><path d="M1 5.5l2.5-2.5h6v2.5M13 9.5l1.5-1.5v5.5L13 15" fill="none" stroke="#111" stroke-width="1.2"/><path d="M7 9.5l2.5-2h5" fill="none" stroke="#111" stroke-width="1.1"/><path d="M8.2 3.5v5h5" fill="none" stroke="#ffe600" stroke-width="1.2"/></svg><svg style="left:165.5px;top:95.0px" width="16" height="16" viewBox="0 0 16 16"><path d="M2.5 5c2-1.5 3.5 0 3.5 3s1.5 5 3.5 5 3-2 3-5" fill="none" stroke="#11ee11" stroke-width="1.6"/><circle cx="2.3" cy="6.3" r="1.2" fill="#ee1111"/><circle cx="12.6" cy="9.5" r="0.9" fill="#ee1111"/><path d="M9.5 3l1.5 1.5 3-3" fill="none" stroke="#11dd11" stroke-width="1.2"/></svg><svg style="left:188.0px;top:95.0px" width="16" height="16" viewBox="0 0 16 16"><path d="M2.5 5c2-1.5 3.5 0 3.5 3s1.5 5 3.5 5 3-2 3-5" fill="none" stroke="#a8a8a8" stroke-width="1.6"/><path d="M10.5 1l4 4M14.5 1l-4 4" stroke="#a0a0a0" stroke-width="1"/></svg><svg style="left:27.5px;top:101.5px" width="6" height="4"><path d="M0 0h6l-3 3.5z" fill="#111"/></svg><div class="a" style="left:38px;top:93px;width:1px;height:18px;background:#a8a8a8"></div><div class="a" style="left:87.5px;top:93px;width:1px;height:18px;background:#a8a8a8"></div><div class="a" style="left:159px;top:93px;width:1px;height:18px;background:#a8a8a8"></div><div class="a" style="left:208px;top:93px;width:1px;height:18px;background:#a8a8a8"></div><div class="a" style="left:217px;top:97px;width:6px;height:12px;overflow:hidden;color:#1111cc;font-weight:bold;font-size:10.5px;line-height:12px">P</div>
<div class="a" style="left:2px;top:114px;width:221px;height:1px;background:#c8c8c8"></div>
<div class="a" style="left:2px;top:114px;width:1px;height:589px;background:#c8c8c8"></div>
<div class="a" style="left:222px;top:114px;width:1px;height:589px;background:#b8b8b8"></div>
<div class="a" style="left:224px;top:88px;width:1px;height:615px;background:#dedede"></div>
<div class="a" style="left:0px;top:702px;width:225px;height:2px;background:#a0a0a0"></div>
<div class="a" style="left:3px;top:688px;width:219px;height:14px;background:#f0f0f2"></div>
<div class="a" style="left:18px;top:693px;width:143px;height:4px;background:#8a8a8a"></div>
<div class="a" style="left:27px;top:132px;width:1px;height:1px;background:#9a9a9a"></div>
<div class="a" style="left:27px;top:134px;width:1px;height:1px;background:#9a9a9a"></div>
<div class="a" style="left:27px;top:136px;width:1px;height:1px;background:#9a9a9a"></div>
<div class="a" style="left:27px;top:138px;width:1px;height:1px;background:#9a9a9a"></div>
<div class="a" style="left:27px;top:140px;width:1px;height:1px;background:#9a9a9a"></div>
<div class="a" style="left:27px;top:142px;width:1px;height:1px;background:#9a9a9a"></div>
<div class="a" style="left:27px;top:144px;width:1px;height:1px;background:#9a9a9a"></div>
<div class="a" style="left:27px;top:146px;width:1px;height:1px;background:#9a9a9a"></div>
<div class="a" style="left:27px;top:148px;width:1px;height:1px;background:#9a9a9a"></div>
<div class="a" style="left:27px;top:150px;width:1px;height:1px;background:#9a9a9a"></div>
<div class="a" style="left:27px;top:152px;width:1px;height:1px;background:#9a9a9a"></div>
<div class="a" style="left:27px;top:154px;width:1px;height:1px;background:#9a9a9a"></div>
<div class="a" style="left:27px;top:156px;width:1px;height:1px;background:#9a9a9a"></div>
<div class="a" style="left:27px;top:158px;width:1px;height:1px;background:#9a9a9a"></div>
<div class="a" style="left:27px;top:160px;width:1px;height:1px;background:#9a9a9a"></div>
<div class="a" style="left:27px;top:162px;width:1px;height:1px;background:#9a9a9a"></div>
<div class="a" style="left:27px;top:164px;width:1px;height:1px;background:#9a9a9a"></div>
<div class="a" style="left:27px;top:166px;width:1px;height:1px;background:#9a9a9a"></div>
<div class="a" style="left:27px;top:168px;width:1px;height:1px;background:#9a9a9a"></div>
<div class="a" style="left:27px;top:170px;width:1px;height:1px;background:#9a9a9a"></div>
<div class="a" style="left:27px;top:172px;width:1px;height:1px;background:#9a9a9a"></div>
<div class="a" style="left:27px;top:174px;width:1px;height:1px;background:#9a9a9a"></div>
<div class="a" style="left:27px;top:176px;width:1px;height:1px;background:#9a9a9a"></div>
<div class="a" style="left:27px;top:178px;width:1px;height:1px;background:#9a9a9a"></div>
<div class="a" style="left:27px;top:180px;width:1px;height:1px;background:#9a9a9a"></div>
<div class="a" style="left:27px;top:182px;width:1px;height:1px;background:#9a9a9a"></div>
<div class="a" style="left:27px;top:184px;width:1px;height:1px;background:#9a9a9a"></div>
<div class="a" style="left:27px;top:186px;width:1px;height:1px;background:#9a9a9a"></div>
<div class="a" style="left:27px;top:188px;width:1px;height:1px;background:#9a9a9a"></div>
<div class="a" style="left:27px;top:190px;width:1px;height:1px;background:#9a9a9a"></div>
<div class="a" style="left:27px;top:192px;width:1px;height:1px;background:#9a9a9a"></div>
<div class="a" style="left:27px;top:194px;width:1px;height:1px;background:#9a9a9a"></div>
<div class="a" style="left:27px;top:196px;width:1px;height:1px;background:#9a9a9a"></div>
<div class="a" style="left:27px;top:198px;width:1px;height:1px;background:#9a9a9a"></div>
<div class="a" style="left:27px;top:200px;width:1px;height:1px;background:#9a9a9a"></div>
<div class="a" style="left:27px;top:202px;width:1px;height:1px;background:#9a9a9a"></div>
<div class="a" style="left:27px;top:204px;width:1px;height:1px;background:#9a9a9a"></div>
<div class="a" style="left:27px;top:206px;width:1px;height:1px;background:#9a9a9a"></div>
<div class="a" style="left:27px;top:208px;width:1px;height:1px;background:#9a9a9a"></div>
<div class="a" style="left:27px;top:210px;width:1px;height:1px;background:#9a9a9a"></div>
<div class="a" style="left:27px;top:212px;width:1px;height:1px;background:#9a9a9a"></div>
<div class="a" style="left:27px;top:214px;width:1px;height:1px;background:#9a9a9a"></div>
<div class="a" style="left:27px;top:216px;width:1px;height:1px;background:#9a9a9a"></div>
<div class="a" style="left:27px;top:218px;width:1px;height:1px;background:#9a9a9a"></div>
<div class="a" style="left:43px;top:148px;width:1px;height:1px;background:#9a9a9a"></div>
<div class="a" style="left:43px;top:150px;width:1px;height:1px;background:#9a9a9a"></div>
<div class="a" style="left:43px;top:152px;width:1px;height:1px;background:#9a9a9a"></div>
<div class="a" style="left:43px;top:154px;width:1px;height:1px;background:#9a9a9a"></div>
<div class="a" style="left:43px;top:180px;width:1px;height:1px;background:#9a9a9a"></div>
<div class="a" style="left:43px;top:182px;width:1px;height:1px;background:#9a9a9a"></div>
<div class="a" style="left:43px;top:184px;width:1px;height:1px;background:#9a9a9a"></div>
<div class="a" style="left:43px;top:186px;width:1px;height:1px;background:#9a9a9a"></div>
<div class="a" style="left:43px;top:188px;width:1px;height:1px;background:#9a9a9a"></div>
<div class="a" style="left:43px;top:190px;width:1px;height:1px;background:#9a9a9a"></div>
<div class="a" style="left:43px;top:192px;width:1px;height:1px;background:#9a9a9a"></div>
<div class="a" style="left:43px;top:194px;width:1px;height:1px;background:#9a9a9a"></div>
<div class="a" style="left:43px;top:196px;width:1px;height:1px;background:#9a9a9a"></div>
<div class="a" style="left:43px;top:198px;width:1px;height:1px;background:#9a9a9a"></div>
<div class="a" style="left:43px;top:200px;width:1px;height:1px;background:#9a9a9a"></div>
<div class="a" style="left:43px;top:202px;width:1px;height:1px;background:#9a9a9a"></div>
<div class="a" style="left:43px;top:228px;width:1px;height:1px;background:#9a9a9a"></div>
<div class="a" style="left:43px;top:230px;width:1px;height:1px;background:#9a9a9a"></div>
<div class="a" style="left:43px;top:232px;width:1px;height:1px;background:#9a9a9a"></div>
<div class="a" style="left:43px;top:234px;width:1px;height:1px;background:#9a9a9a"></div>
<div class="a" style="left:43px;top:236px;width:1px;height:1px;background:#9a9a9a"></div>
<div class="a" style="left:43px;top:238px;width:1px;height:1px;background:#9a9a9a"></div>
<div class="a" style="left:43px;top:240px;width:1px;height:1px;background:#9a9a9a"></div>
<div class="a" style="left:43px;top:242px;width:1px;height:1px;background:#9a9a9a"></div>
<div class="a" style="left:43px;top:244px;width:1px;height:1px;background:#9a9a9a"></div>
<div class="a" style="left:43px;top:246px;width:1px;height:1px;background:#9a9a9a"></div>
<div class="a" style="left:43px;top:248px;width:1px;height:1px;background:#9a9a9a"></div>
<div class="a" style="left:43px;top:250px;width:1px;height:1px;background:#9a9a9a"></div>
<div class="a" style="left:43px;top:252px;width:1px;height:1px;background:#9a9a9a"></div>
<div class="a" style="left:43px;top:254px;width:1px;height:1px;background:#9a9a9a"></div>
<div class="a" style="left:43px;top:256px;width:1px;height:1px;background:#9a9a9a"></div>
<div class="a" style="left:43px;top:258px;width:1px;height:1px;background:#9a9a9a"></div>
<div class="a" style="left:43px;top:260px;width:1px;height:1px;background:#9a9a9a"></div>
<div class="a" style="left:43px;top:262px;width:1px;height:1px;background:#9a9a9a"></div>
<div class="a" style="left:43px;top:264px;width:1px;height:1px;background:#9a9a9a"></div>
<div class="a" style="left:43px;top:266px;width:1px;height:1px;background:#9a9a9a"></div>
<div class="a" style="left:43px;top:268px;width:1px;height:1px;background:#9a9a9a"></div>
<div class="a" style="left:43px;top:270px;width:1px;height:1px;background:#9a9a9a"></div>
<div class="a" style="left:43px;top:272px;width:1px;height:1px;background:#9a9a9a"></div>
<div class="a" style="left:43px;top:274px;width:1px;height:1px;background:#9a9a9a"></div>
<div class="a" style="left:43px;top:276px;width:1px;height:1px;background:#9a9a9a"></div>
<div class="a" style="left:43px;top:278px;width:1px;height:1px;background:#9a9a9a"></div>
<div class="a" style="left:43px;top:280px;width:1px;height:1px;background:#9a9a9a"></div>
<div class="a" style="left:43px;top:282px;width:1px;height:1px;background:#9a9a9a"></div>
<div class="a" style="left:43px;top:284px;width:1px;height:1px;background:#9a9a9a"></div>
<div class="a" style="left:43px;top:286px;width:1px;height:1px;background:#9a9a9a"></div>
<div class="a" style="left:43px;top:288px;width:1px;height:1px;background:#9a9a9a"></div>
<div class="a" style="left:43px;top:290px;width:1px;height:1px;background:#9a9a9a"></div>
<div class="a" style="left:43px;top:292px;width:1px;height:1px;background:#9a9a9a"></div>
<div class="a" style="left:43px;top:294px;width:1px;height:1px;background:#9a9a9a"></div>
<div class="a" style="left:43px;top:296px;width:1px;height:1px;background:#9a9a9a"></div>
<div class="a" style="left:43px;top:298px;width:1px;height:1px;background:#9a9a9a"></div>
<div class="a" style="left:43px;top:300px;width:1px;height:1px;background:#9a9a9a"></div>
<div class="a" style="left:43px;top:302px;width:1px;height:1px;background:#9a9a9a"></div>
<div class="a" style="left:43px;top:304px;width:1px;height:1px;background:#9a9a9a"></div>
<div class="a" style="left:43px;top:306px;width:1px;height:1px;background:#9a9a9a"></div>
<div class="a" style="left:43px;top:308px;width:1px;height:1px;background:#9a9a9a"></div>
<div class="a" style="left:43px;top:310px;width:1px;height:1px;background:#9a9a9a"></div>
<div class="a" style="left:43px;top:312px;width:1px;height:1px;background:#9a9a9a"></div>
<div class="a" style="left:43px;top:314px;width:1px;height:1px;background:#9a9a9a"></div>
<div class="a" style="left:43px;top:316px;width:1px;height:1px;background:#9a9a9a"></div>
<div class="a" style="left:43px;top:318px;width:1px;height:1px;background:#9a9a9a"></div>
<div class="a" style="left:43px;top:320px;width:1px;height:1px;background:#9a9a9a"></div>
<div class="a" style="left:43px;top:322px;width:1px;height:1px;background:#9a9a9a"></div>
<div class="a" style="left:43px;top:324px;width:1px;height:1px;background:#9a9a9a"></div>
<div class="a" style="left:43px;top:326px;width:1px;height:1px;background:#9a9a9a"></div>
<div class="a" style="left:43px;top:328px;width:1px;height:1px;background:#9a9a9a"></div>
<div class="a" style="left:43px;top:330px;width:1px;height:1px;background:#9a9a9a"></div>
<div class="a" style="left:43px;top:332px;width:1px;height:1px;background:#9a9a9a"></div>
<div class="a" style="left:43px;top:334px;width:1px;height:1px;background:#9a9a9a"></div>
<div class="a" style="left:43px;top:336px;width:1px;height:1px;background:#9a9a9a"></div>
<div class="a" style="left:43px;top:338px;width:1px;height:1px;background:#9a9a9a"></div>
<div class="a" style="left:43px;top:340px;width:1px;height:1px;background:#9a9a9a"></div>
<div class="a" style="left:43px;top:342px;width:1px;height:1px;background:#9a9a9a"></div>
<div class="a" style="left:43px;top:344px;width:1px;height:1px;background:#9a9a9a"></div>
<div class="a" style="left:43px;top:346px;width:1px;height:1px;background:#9a9a9a"></div>
<div class="a" style="left:43px;top:348px;width:1px;height:1px;background:#9a9a9a"></div>
<div class="a" style="left:43px;top:350px;width:1px;height:1px;background:#9a9a9a"></div>
<div class="a" style="left:43px;top:352px;width:1px;height:1px;background:#9a9a9a"></div>
<div class="a" style="left:43px;top:354px;width:1px;height:1px;background:#9a9a9a"></div>
<div class="a" style="left:43px;top:356px;width:1px;height:1px;background:#9a9a9a"></div>
<div class="a" style="left:43px;top:358px;width:1px;height:1px;background:#9a9a9a"></div>
<div class="a" style="left:43px;top:360px;width:1px;height:1px;background:#9a9a9a"></div>
<div class="a" style="left:43px;top:362px;width:1px;height:1px;background:#9a9a9a"></div>
<div class="a" style="left:3px;top:115px;width:220px;height:573px;overflow:hidden">
<div class="a" style="left:4px;top:5px;width:9px;height:9px;border:1px solid #b8bcc4;border-radius:1px;background:linear-gradient(#fff,#e9ebef)"></div>
<div class="a" style="left:6px;top:9px;width:5px;height:1px;background:#4b5d87"></div>
<div class="a" style="left:13px;top:9px;width:1px;height:1px;background:#9a9a9a"></div>
<div class="a" style="left:15px;top:9px;width:1px;height:1px;background:#9a9a9a"></div>
<div class="a" style="left:17px;top:9px;width:1px;height:1px;background:#9a9a9a"></div>
<svg style="left:18px;top:3px" width="13" height="13" viewBox="0 0 13 13"><g fill="#175a9c"><circle cx="6.5" cy="6.5" r="4.6"/><rect x="5.3" y="0" width="2.4" height="13"/><rect x="0" y="5.3" width="13" height="2.4"/><rect x="5.3" y="0" width="2.4" height="13" transform="rotate(45 6.5 6.5)"/><rect x="5.3" y="0" width="2.4" height="13" transform="rotate(-45 6.5 6.5)"/></g><circle cx="6.5" cy="6.5" r="1.8" fill="#fff"/></svg>
<div class="a t" style="left:34px;top:2.64px;font-size:11px;color:#000;font-weight:bold;font-family:'Liberation Sans',sans-serif;letter-spacing:0.000px;line-height:normal;transform:scaleX(0.9714);transform-origin:0 0;">Machining&#32;setup-1</div>
<div class="a" style="left:20px;top:21px;width:9px;height:9px;border:1px solid #b8bcc4;border-radius:1px;background:linear-gradient(#fff,#e9ebef)"></div>
<div class="a" style="left:22px;top:25px;width:5px;height:1px;background:#4b5d87"></div>
<div class="a" style="left:29px;top:25px;width:1px;height:1px;background:#9a9a9a"></div>
<div class="a" style="left:31px;top:25px;width:1px;height:1px;background:#9a9a9a"></div>
<div class="a" style="left:33px;top:25px;width:1px;height:1px;background:#9a9a9a"></div>
<svg style="left:32px;top:17px" width="14" height="14" viewBox="0 0 14 14"><path d="M1,2.5 L4,1 L5.5,1 L12,7.5 L12,11 L9,11.5 L1,5.5 Z" fill="#1a66c8" stroke="#08204a" stroke-width="0.6"/><path d="M2,5.2 L9.2,11" stroke="#061a3a" stroke-width="1.6"/><path d="M4.5,2 L11.5,8" stroke="#2a8ae8" stroke-width="1"/><circle cx="2" cy="2.5" r="0.8" fill="#1a7a2a"/><circle cx="9.5" cy="11.2" r="0.8" fill="#1a7a2a"/><circle cx="3" cy="3.2" r="0.9" fill="#d8e8f8"/></svg>
<div class="a t" style="left:50.5px;top:18.64px;font-size:11px;color:#000;font-weight:bold;font-family:'Liberation Sans',sans-serif;letter-spacing:0.000px;line-height:normal;transform:scaleX(0.9726);transform-origin:0 0;">1.&#32;Operation&#32;group</div>
<div class="a" style="left:36px;top:37px;width:9px;height:9px;border:1px solid #b8bcc4;border-radius:1px;background:linear-gradient(#fff,#e9ebef)"></div>
<div class="a" style="left:38px;top:41px;width:5px;height:1px;background:#4b5d87"></div>
<div class="a" style="left:40px;top:39px;width:1px;height:5px;background:#4b5d87"></div>
<div class="a" style="left:45px;top:41px;width:1px;height:1px;background:#9a9a9a"></div>
<div class="a" style="left:47px;top:41px;width:1px;height:1px;background:#9a9a9a"></div>
<div class="a" style="left:49px;top:41px;width:1px;height:1px;background:#9a9a9a"></div>
<div class="a" style="left:52px;top:36px;width:9px;height:9px;background:#6fe23a;border:1px solid #3c9a25;border-radius:1px"></div>
<div class="a t" style="left:66px;top:34.64px;font-size:11px;color:#1e1e1e;font-weight:normal;font-family:'Liberation Sans',sans-serif;letter-spacing:0.000px;line-height:normal;transform:scaleX(0.9650);transform-origin:0 0;">1-1.&#32;samout.r06&#32;[exducer&#32;-&#32;finish</div>
<div class="a" style="left:20px;top:53px;width:9px;height:9px;border:1px solid #b8bcc4;border-radius:1px;background:linear-gradient(#fff,#e9ebef)"></div>
<div class="a" style="left:22px;top:57px;width:5px;height:1px;background:#4b5d87"></div>
<div class="a" style="left:29px;top:57px;width:1px;height:1px;background:#9a9a9a"></div>
<div class="a" style="left:31px;top:57px;width:1px;height:1px;background:#9a9a9a"></div>
<div class="a" style="left:33px;top:57px;width:1px;height:1px;background:#9a9a9a"></div>
<svg style="left:32px;top:49px" width="14" height="14" viewBox="0 0 14 14"><path d="M1,2.5 L4,1 L5.5,1 L12,7.5 L12,11 L9,11.5 L1,5.5 Z" fill="#1a66c8" stroke="#08204a" stroke-width="0.6"/><path d="M2,5.2 L9.2,11" stroke="#061a3a" stroke-width="1.6"/><path d="M4.5,2 L11.5,8" stroke="#2a8ae8" stroke-width="1"/><circle cx="2" cy="2.5" r="0.8" fill="#1a7a2a"/><circle cx="9.5" cy="11.2" r="0.8" fill="#1a7a2a"/><circle cx="3" cy="3.2" r="0.9" fill="#d8e8f8"/></svg>
<div class="a t" style="left:50.5px;top:50.64px;font-size:11px;color:#000;font-weight:bold;font-family:'Liberation Sans',sans-serif;letter-spacing:0.000px;line-height:normal;transform:scaleX(0.9799);transform-origin:0 0;">2.&#32;Operation&#32;group-3</div>
<div class="a" style="left:36px;top:69px;width:9px;height:9px;border:1px solid #b8bcc4;border-radius:1px;background:linear-gradient(#fff,#e9ebef)"></div>
<div class="a" style="left:38px;top:73px;width:5px;height:1px;background:#4b5d87"></div>
<div class="a" style="left:40px;top:71px;width:1px;height:5px;background:#4b5d87"></div>
<div class="a" style="left:45px;top:73px;width:1px;height:1px;background:#9a9a9a"></div>
<div class="a" style="left:47px;top:73px;width:1px;height:1px;background:#9a9a9a"></div>
<div class="a" style="left:49px;top:73px;width:1px;height:1px;background:#9a9a9a"></div>
<div class="a" style="left:52px;top:68px;width:9px;height:9px;background:#ffe81a;border:1px solid #c8a000;border-radius:1px"></div>
<div class="a t" style="left:66px;top:66.64px;font-size:11px;color:#1e1e1e;font-weight:normal;font-family:'Liberation Sans',sans-serif;letter-spacing:0.000px;line-height:normal;transform:scaleX(0.9650);transform-origin:0 0;">2-1.&#32;SamOut.r12&#32;[exducer&#32;-&#32;finish]</div>
<div class="a" style="left:36px;top:85px;width:9px;height:9px;border:1px solid #b8bcc4;border-radius:1px;background:linear-gradient(#fff,#e9ebef)"></div>
<div class="a" style="left:38px;top:89px;width:5px;height:1px;background:#4b5d87"></div>
<div class="a" style="left:40px;top:87px;width:1px;height:5px;background:#4b5d87"></div>
<div class="a" style="left:45px;top:89px;width:1px;height:1px;background:#9a9a9a"></div>
<div class="a" style="left:47px;top:89px;width:1px;height:1px;background:#9a9a9a"></div>
<div class="a" style="left:49px;top:89px;width:1px;height:1px;background:#9a9a9a"></div>
<div class="a" style="left:52px;top:84px;width:9px;height:9px;background:#6fe23a;border:1px solid #3c9a25;border-radius:1px"></div>
<div class="a t" style="left:66px;top:82.64px;font-size:11px;color:#1e1e1e;font-weight:normal;font-family:'Liberation Sans',sans-serif;letter-spacing:0.000px;line-height:normal;transform:scaleX(0.9650);transform-origin:0 0;">2-2.&#32;SamOut.r11&#32;[exducer&#32;-&#32;finish</div>
<div class="a" style="left:20px;top:101px;width:9px;height:9px;border:1px solid #b8bcc4;border-radius:1px;background:linear-gradient(#fff,#e9ebef)"></div>
<div class="a" style="left:22px;top:105px;width:5px;height:1px;background:#4b5d87"></div>
<div class="a" style="left:29px;top:105px;width:1px;height:1px;background:#9a9a9a"></div>
<div class="a" style="left:31px;top:105px;width:1px;height:1px;background:#9a9a9a"></div>
<div class="a" style="left:33px;top:105px;width:1px;height:1px;background:#9a9a9a"></div>
<svg style="left:32px;top:97px" width="14" height="14" viewBox="0 0 14 14"><path d="M1,2.5 L4,1 L5.5,1 L12,7.5 L12,11 L9,11.5 L1,5.5 Z" fill="#1a66c8" stroke="#08204a" stroke-width="0.6"/><path d="M2,5.2 L9.2,11" stroke="#061a3a" stroke-width="1.6"/><path d="M4.5,2 L11.5,8" stroke="#2a8ae8" stroke-width="1"/><circle cx="2" cy="2.5" r="0.8" fill="#1a7a2a"/><circle cx="9.5" cy="11.2" r="0.8" fill="#1a7a2a"/><circle cx="3" cy="3.2" r="0.9" fill="#d8e8f8"/></svg>
<div class="a t" style="left:50.5px;top:98.64px;font-size:11px;color:#000;font-weight:bold;font-family:'Liberation Sans',sans-serif;letter-spacing:0.000px;line-height:normal;transform:scaleX(0.9799);transform-origin:0 0;">3.&#32;Operation&#32;group-2</div>
<div class="a" style="left:36px;top:117px;width:9px;height:9px;border:1px solid #b8bcc4;border-radius:1px;background:linear-gradient(#fff,#e9ebef)"></div>
<div class="a" style="left:38px;top:121px;width:5px;height:1px;background:#4b5d87"></div>
<div class="a" style="left:40px;top:119px;width:1px;height:5px;background:#4b5d87"></div>
<div class="a" style="left:45px;top:121px;width:1px;height:1px;background:#9a9a9a"></div>
<div class="a" style="left:47px;top:121px;width:1px;height:1px;background:#9a9a9a"></div>
<div class="a" style="left:49px;top:121px;width:1px;height:1px;background:#9a9a9a"></div>
<div class="a" style="left:52px;top:116px;width:9px;height:9px;background:#6fe23a;border:1px solid #3c9a25;border-radius:1px"></div>
<div class="a t" style="left:66px;top:114.64px;font-size:11px;color:#1e1e1e;font-weight:normal;font-family:'Liberation Sans',sans-serif;letter-spacing:0.000px;line-height:normal;transform:scaleX(0.9650);transform-origin:0 0;">3-1.&#32;samout.r02&#32;[inducer&#32;-&#32;deep]</div>
<div class="a" style="left:36px;top:133px;width:9px;height:9px;border:1px solid #b8bcc4;border-radius:1px;background:linear-gradient(#fff,#e9ebef)"></div>
<div class="a" style="left:38px;top:137px;width:5px;height:1px;background:#4b5d87"></div>
<div class="a" style="left:40px;top:135px;width:1px;height:5px;background:#4b5d87"></div>
<div class="a" style="left:45px;top:137px;width:1px;height:1px;background:#9a9a9a"></div>
<div class="a" style="left:47px;top:137px;width:1px;height:1px;background:#9a9a9a"></div>
<div class="a" style="left:49px;top:137px;width:1px;height:1px;background:#9a9a9a"></div>
<div class="a" style="left:52px;top:132px;width:9px;height:9px;background:#6fe23a;border:1px solid #3c9a25;border-radius:1px"></div>
<div class="a t" style="left:66px;top:130.64px;font-size:11px;color:#1e1e1e;font-weight:normal;font-family:'Liberation Sans',sans-serif;letter-spacing:0.000px;line-height:normal;transform:scaleX(0.9650);transform-origin:0 0;">3-2.&#32;samout.r04&#32;[exducer&#32;-&#32;deep</div>
<div class="a" style="left:36px;top:149px;width:9px;height:9px;border:1px solid #b8bcc4;border-radius:1px;background:linear-gradient(#fff,#e9ebef)"></div>
<div class="a" style="left:38px;top:153px;width:5px;height:1px;background:#4b5d87"></div>
<div class="a" style="left:40px;top:151px;width:1px;height:5px;background:#4b5d87"></div>
<div class="a" style="left:45px;top:153px;width:1px;height:1px;background:#9a9a9a"></div>
<div class="a" style="left:47px;top:153px;width:1px;height:1px;background:#9a9a9a"></div>
<div class="a" style="left:49px;top:153px;width:1px;height:1px;background:#9a9a9a"></div>
<div class="a" style="left:52px;top:148px;width:9px;height:9px;background:#c4c4c4;border:1px solid #b0b0b0;border-radius:1px"></div>
<div class="a t" style="left:66px;top:146.65px;font-size:11px;color:#1e1e1e;font-weight:normal;font-family:'Liberation Sans',sans-serif;letter-spacing:0.000px;line-height:normal;transform:scaleX(0.9650);transform-origin:0 0;">3-3.&#32;SamOut.r09&#32;[SI&#32;pocket&#32;3]</div>
<div class="a" style="left:36px;top:165px;width:9px;height:9px;border:1px solid #b8bcc4;border-radius:1px;background:linear-gradient(#fff,#e9ebef)"></div>
<div class="a" style="left:38px;top:169px;width:5px;height:1px;background:#4b5d87"></div>
<div class="a" style="left:40px;top:167px;width:1px;height:5px;background:#4b5d87"></div>
<div class="a" style="left:45px;top:169px;width:1px;height:1px;background:#9a9a9a"></div>
<div class="a" style="left:47px;top:169px;width:1px;height:1px;background:#9a9a9a"></div>
<div class="a" style="left:49px;top:169px;width:1px;height:1px;background:#9a9a9a"></div>
<div class="a" style="left:52px;top:164px;width:9px;height:9px;background:#6fe23a;border:1px solid #3c9a25;border-radius:1px"></div>
<div class="a t" style="left:66px;top:162.65px;font-size:11px;color:#1e1e1e;font-weight:normal;font-family:'Liberation Sans',sans-serif;letter-spacing:0.000px;line-height:normal;transform:scaleX(0.9650);transform-origin:0 0;">3-4.&#32;SamOut.r07&#32;[SI&#32;pocket&#32;1]</div>
<div class="a" style="left:36px;top:181px;width:9px;height:9px;border:1px solid #b8bcc4;border-radius:1px;background:linear-gradient(#fff,#e9ebef)"></div>
<div class="a" style="left:38px;top:185px;width:5px;height:1px;background:#4b5d87"></div>
<div class="a" style="left:40px;top:183px;width:1px;height:5px;background:#4b5d87"></div>
<div class="a" style="left:45px;top:185px;width:1px;height:1px;background:#9a9a9a"></div>
<div class="a" style="left:47px;top:185px;width:1px;height:1px;background:#9a9a9a"></div>
<div class="a" style="left:49px;top:185px;width:1px;height:1px;background:#9a9a9a"></div>
<div class="a" style="left:52px;top:180px;width:9px;height:9px;background:#6fe23a;border:1px solid #3c9a25;border-radius:1px"></div>
<div class="a t" style="left:66px;top:178.65px;font-size:11px;color:#1e1e1e;font-weight:normal;font-family:'Liberation Sans',sans-serif;letter-spacing:0.000px;line-height:normal;transform:scaleX(0.9650);transform-origin:0 0;">3-5.&#32;SamOut.r08&#32;[SI&#32;pocket&#32;2]</div>
<div class="a" style="left:36px;top:197px;width:9px;height:9px;border:1px solid #b8bcc4;border-radius:1px;background:linear-gradient(#fff,#e9ebef)"></div>
<div class="a" style="left:38px;top:201px;width:5px;height:1px;background:#4b5d87"></div>
<div class="a" style="left:40px;top:199px;width:1px;height:5px;background:#4b5d87"></div>
<div class="a" style="left:45px;top:201px;width:1px;height:1px;background:#9a9a9a"></div>
<div class="a" style="left:47px;top:201px;width:1px;height:1px;background:#9a9a9a"></div>
<div class="a" style="left:49px;top:201px;width:1px;height:1px;background:#9a9a9a"></div>
<div class="a" style="left:52px;top:196px;width:9px;height:9px;background:#ffe81a;border:1px solid #c8a000;border-radius:1px"></div>
<div class="a t" style="left:66px;top:194.65px;font-size:11px;color:#1e1e1e;font-weight:normal;font-family:'Liberation Sans',sans-serif;letter-spacing:0.000px;line-height:normal;transform:scaleX(0.9650);transform-origin:0 0;">3-6.&#32;SamOut.r10&#32;[SI&#32;pocket&#32;2]</div>
<div class="a" style="left:36px;top:213px;width:9px;height:9px;border:1px solid #b8bcc4;border-radius:1px;background:linear-gradient(#fff,#e9ebef)"></div>
<div class="a" style="left:38px;top:217px;width:5px;height:1px;background:#4b5d87"></div>
<div class="a" style="left:40px;top:215px;width:1px;height:5px;background:#4b5d87"></div>
<div class="a" style="left:45px;top:217px;width:1px;height:1px;background:#9a9a9a"></div>
<div class="a" style="left:47px;top:217px;width:1px;height:1px;background:#9a9a9a"></div>
<div class="a" style="left:49px;top:217px;width:1px;height:1px;background:#9a9a9a"></div>
<div class="a" style="left:52px;top:212px;width:9px;height:9px;background:#6fe23a;border:1px solid #3c9a25;border-radius:1px"></div>
<div class="a t" style="left:66px;top:210.65px;font-size:11px;color:#1e1e1e;font-weight:normal;font-family:'Liberation Sans',sans-serif;letter-spacing:0.000px;line-height:normal;transform:scaleX(0.9650);transform-origin:0 0;">3-7.&#32;samout.r05&#32;[inducer&#32;-&#32;finish]</div>
<div class="a" style="left:36px;top:229px;width:9px;height:9px;border:1px solid #b8bcc4;border-radius:1px;background:linear-gradient(#fff,#e9ebef)"></div>
<div class="a" style="left:38px;top:233px;width:5px;height:1px;background:#4b5d87"></div>
<div class="a" style="left:40px;top:231px;width:1px;height:5px;background:#4b5d87"></div>
<div class="a" style="left:45px;top:233px;width:1px;height:1px;background:#9a9a9a"></div>
<div class="a" style="left:47px;top:233px;width:1px;height:1px;background:#9a9a9a"></div>
<div class="a" style="left:49px;top:233px;width:1px;height:1px;background:#9a9a9a"></div>
<div class="a" style="left:52px;top:228px;width:9px;height:9px;background:#ffe81a;border:1px solid #c8a000;border-radius:1px"></div>
<div class="a t" style="left:66px;top:226.65px;font-size:11px;color:#1e1e1e;font-weight:normal;font-family:'Liberation Sans',sans-serif;letter-spacing:0.000px;line-height:normal;transform:scaleX(0.9650);transform-origin:0 0;">3-8.&#32;samout.r01&#32;[inducer&#32;-&#32;5/32&#32;s</div>
<div class="a" style="left:36px;top:245px;width:9px;height:9px;border:1px solid #b8bcc4;border-radius:1px;background:linear-gradient(#fff,#e9ebef)"></div>
<div class="a" style="left:38px;top:249px;width:5px;height:1px;background:#4b5d87"></div>
<div class="a" style="left:40px;top:247px;width:1px;height:5px;background:#4b5d87"></div>
<div class="a" style="left:45px;top:249px;width:1px;height:1px;background:#9a9a9a"></div>
<div class="a" style="left:47px;top:249px;width:1px;height:1px;background:#9a9a9a"></div>
<div class="a" style="left:49px;top:249px;width:1px;height:1px;background:#9a9a9a"></div>
<div class="a" style="left:52px;top:244px;width:9px;height:9px;background:#c4c4c4;border:1px solid #b0b0b0;border-radius:1px"></div>
<div class="a t" style="left:66px;top:242.65px;font-size:11px;color:#1e1e1e;font-weight:normal;font-family:'Liberation Sans',sans-serif;letter-spacing:0.000px;line-height:normal;transform:scaleX(0.9650);transform-origin:0 0;">3-9.&#32;samout.r03&#32;[exducer&#32;-&#32;1/4&#32;st</div>
</div>
<div class="a" style="left:0px;top:704px;width:229px;height:21px;background:#f9fafb"></div>
<div class="a" style="left:224px;top:704px;width:5px;height:21px;background:#fdfdfd"></div>
<div class="a" style="left:4px;top:705px;width:42px;height:19px;background:#f6f7f9"></div>
<div class="a" style="left:47px;top:705px;width:46px;height:19px;background:#f6f7f9"></div>
<div class="a" style="left:94px;top:705px;width:50px;height:19px;background:#f6f7f9"></div>
<svg style="left:5px;top:708px" width="14" height="13" viewBox="0 0 14 13"><circle cx="4.5" cy="2.5" r="2.2" fill="#2aa6a6"/><circle cx="3" cy="9" r="2.6" fill="#8a3a9a"/><circle cx="9.5" cy="8.5" r="3.3" fill="#7a2a1a"/><circle cx="8.5" cy="6" r="2" fill="#b03020"/></svg>
<div class="a t" style="left:21px;top:708.54px;font-size:11px;color:#1a2a4a;font-weight:normal;font-family:'Liberation Sans',sans-serif;letter-spacing:0.000px;line-height:normal;transform:scaleX(0.8612);transform-origin:0 0;">CAD</div>
<svg style="left:50px;top:707px" width="13" height="13" viewBox="0 0 13 13"><g fill="#175a9c"><circle cx="6.5" cy="6.5" r="4.6"/><rect x="5.3" y="0" width="2.4" height="13"/><rect x="0" y="5.3" width="13" height="2.4"/><rect x="5.3" y="0" width="2.4" height="13" transform="rotate(45 6.5 6.5)"/><rect x="5.3" y="0" width="2.4" height="13" transform="rotate(-45 6.5 6.5)"/></g><circle cx="6.5" cy="6.5" r="1.8" fill="#fff"/></svg>
<div class="a t" style="left:66px;top:708.54px;font-size:11px;color:#1a2a4a;font-weight:normal;font-family:'Liberation Sans',sans-serif;letter-spacing:0.000px;line-height:normal;transform:scaleX(0.9000);transform-origin:0 0;">CAM</div>
<svg style="left:97px;top:707px" width="14" height="14" viewBox="0 0 14 14"><circle cx="7" cy="7" r="6.6" fill="#5a93d8"/><circle cx="7" cy="7" r="4.3" fill="#12801e"/><circle cx="7" cy="7" r="1.6" fill="#e8e8e8"/></svg>
<div class="a t" style="left:113px;top:708.54px;font-size:11px;color:#1a2a4a;font-weight:normal;font-family:'Liberation Sans',sans-serif;letter-spacing:0.000px;line-height:normal;transform:scaleX(0.7768);transform-origin:0 0;">PART</div>
<div class="a" style="left:228px;top:68px;width:1172px;height:498px;background:#f4f4f4"></div>
<div class="a" style="left:228px;top:68px;width:1px;height:498px;background:#a0a0a0"></div>
<div class="a" style="left:228px;top:68px;width:1171px;height:1px;background:#a8a8a8"></div>
<div class="a" style="left:229px;top:69px;width:1170px;height:497px;background:#000"></div>
<svg style="left:0;top:0" width="1400" height="744" viewBox="0 0 1400 744"><defs><clipPath id="vc"><rect x="229" y="69" width="1170" height="497"/></clipPath><linearGradient id="gshroud" x1="300" y1="90" x2="260" y2="252" gradientUnits="userSpaceOnUse"><stop offset="0" stop-color="#8e8e8e"/><stop offset="0.5" stop-color="#808080"/><stop offset="1" stop-color="#717171"/></linearGradient><linearGradient id="gp1" x1="0" x2="1" y1="0" y2="0"><stop offset="0" stop-color="#e4e4e4"/><stop offset="0.3" stop-color="#f8f8f8"/><stop offset="0.65" stop-color="#dedede"/><stop offset="1" stop-color="#a4a4a4"/></linearGradient><linearGradient id="gp2" x1="0" x2="1" y1="0" y2="0"><stop offset="0" stop-color="#f2f2f2"/><stop offset="0.3" stop-color="#eeeeee"/><stop offset="0.7" stop-color="#c4c4c4"/><stop offset="1" stop-color="#8e8e8e"/></linearGradient><linearGradient id="gblue" x1="229" x2="523" y1="0" y2="0" gradientUnits="userSpaceOnUse"><stop offset="0" stop-color="#2a7bd9"/><stop offset="0.3" stop-color="#2274d0"/><stop offset="0.6" stop-color="#1c6bc2"/><stop offset="0.9" stop-color="#1862b2"/><stop offset="0.95" stop-color="#14569c"/><stop offset="1" stop-color="#14569c"/></linearGradient><linearGradient id="glb" x1="229" y1="253" x2="330" y2="362" gradientUnits="userSpaceOnUse"><stop offset="0" stop-color="#d2d2d2"/><stop offset="1" stop-color="#c9c9c9"/></linearGradient></defs><g clip-path="url(#vc)"><path d="M229,75.5 C232.7,80.5 243.9,96.3 251.3,105.4 C258.8,114.5 266.2,122.4 273.7,130.0 C281.1,137.6 288.6,144.4 296.0,150.8 C303.4,157.2 310.9,163.1 318.4,168.6 C325.8,174.1 333.2,179.2 340.7,184.1 C348.1,188.9 355.7,193.4 363.1,197.7 C370.6,201.9 377.9,205.9 385.4,209.6 C392.8,213.3 400.4,216.8 407.8,220.0 C415.2,223.2 422.7,226.2 430.1,228.9 C437.6,231.6 445.1,234.1 452.5,236.3 C459.9,238.6 467.4,240.6 474.8,242.4 C482.2,244.2 489.8,245.9 497.2,247.3 C504.6,248.7 515.8,250.1 519.5,250.6 L519.5,253 L229,253 Z" fill="url(#gshroud)"/><path d="M229,75.5 C232.7,80.5 243.9,96.3 251.3,105.4 C258.8,114.5 266.2,122.4 273.7,130.0 C281.1,137.6 288.6,144.4 296.0,150.8 C303.4,157.2 310.9,163.1 318.4,168.6 C325.8,174.1 333.2,179.2 340.7,184.1 C348.1,188.9 355.7,193.4 363.1,197.7 C370.6,201.9 377.9,205.9 385.4,209.6 C392.8,213.3 400.4,216.8 407.8,220.0 C415.2,223.2 422.7,226.2 430.1,228.9 C437.6,231.6 445.1,234.1 452.5,236.3 C459.9,238.6 467.4,240.6 474.8,242.4 C482.2,244.2 489.8,245.9 497.2,247.3 C504.6,248.7 515.8,250.1 519.5,250.6" fill="none" stroke="#f4f4f4" stroke-width="1.3"/><path d="M229.0,146.9 C231.6,149.1 239.6,155.7 244.8,159.9 C250.1,164.1 255.2,168.2 260.5,172.1 C265.8,176.0 271.0,179.8 276.3,183.4 C281.6,187.0 286.9,190.5 292.1,193.8 C297.4,197.1 302.6,200.4 307.8,203.4 C313.1,206.4 318.3,209.3 323.6,212.1 C328.9,214.9 334.1,217.5 339.4,220.0 C344.7,222.5 349.9,224.9 355.2,227.1 C360.4,229.3 365.6,231.4 370.9,233.4 C376.1,235.4 381.4,237.3 386.7,239.0 C392.0,240.7 397.2,242.2 402.5,243.7 C407.8,245.1 412.9,246.5 418.2,247.7 C423.4,248.9 431.4,250.4 434.0,251.0" fill="none" stroke="#eaeaea" stroke-width="1.1"/><path d="M229.0,161.5 C231.5,163.3 239.1,168.9 244.1,172.5 C249.1,176.1 254.2,179.5 259.2,182.8 C264.2,186.2 269.2,189.5 274.2,192.6 C279.2,195.7 284.3,198.7 289.3,201.6 C294.3,204.5 299.4,207.3 304.4,210.0 C309.4,212.7 314.5,215.3 319.5,217.7 C324.5,220.1 329.5,222.4 334.5,224.6 C339.5,226.8 344.6,228.9 349.6,230.9 C354.6,232.9 359.7,234.7 364.7,236.4 C369.7,238.1 374.8,239.7 379.8,241.1 C384.8,242.5 389.8,243.8 394.8,245.0 C399.8,246.2 404.9,247.2 409.9,248.1 C414.9,249.0 422.5,250.0 425.0,250.4" fill="none" stroke="#eaeaea" stroke-width="1.1"/><path d="M229.8,81 C231.3,83.0 235.3,88.5 238.7,93 C242.1,97.5 246.8,104.0 250,107.7 C253.2,111.4 256.7,113.8 258,115" fill="none" stroke="#e0e0e0" stroke-width="0.9"/><path d="M229,252 L519.5,252 L519.5,362 L229,364 Z" fill="#6c6c6c"/><path d="M229,253 L410,253 L404,362.5 L388,362.7 C360,359.5 337,357.3 283,347.8 C260,343 245,339.5 229,336.3 Z" fill="url(#glb)"/><path d="M229,336.3 C245,339.5 260,343 283,347.8 C337,357.3 360,359.5 388,361" fill="none" stroke="#ececec" stroke-width="1"/><path d="M434,253 L501,253 L498,359.5 L434,359.5 Z" fill="#f7f8fa"/><path d="M434,359 L506,359 L506,361.5 L434,361.5 Z" fill="#7c7c7c"/><path d="M410,253 L434,253 L434,362.5 L404,362.5 Z" fill="url(#gp1)"/><path d="M501,253 L519.3,252.5 L519.3,360.5 L498,360.5 Z" fill="url(#gp2)"/><line x1="229" y1="252.5" x2="520" y2="252.3" stroke="#f6f6f6" stroke-width="1.1"/><g shape-rendering="crispEdges"><rect x="229" y="362" width="54" height="84" fill="#277ad9"/><rect x="283" y="362" width="17" height="84" fill="#2378d6"/><rect x="300" y="362" width="32" height="84" fill="#1f77d4"/><rect x="332" y="362" width="24" height="84" fill="#1c6fc8"/><rect x="356" y="362" width="28" height="84" fill="#1a73cf"/><rect x="384" y="362" width="45" height="84" fill="#1a6ac4"/><rect x="429" y="362" width="15" height="84" fill="#1568bf"/><rect x="444" y="362" width="5" height="84" fill="#1a6ccb"/><rect x="449" y="362" width="53" height="84" fill="#1460ae"/><rect x="502" y="362" width="17" height="84" fill="#10579e"/><rect x="519" y="362" width="4" height="84" fill="#0d4a90"/></g><path d="M229,362 L523,360 L523,362 L229,364 Z" fill="#000"/><path d="M229,364 L404,362.5 L404,361 L229,361 Z" fill="#6c6c6c"/><path d="M229,363.5 L523,361.3" fill="none" stroke="#f4f6fa" stroke-width="1.1"/><path d="M229,445.5 L523,443.5 L523,438.5 L700,439 L900,440.5 L935,442.6 L900,445 L700,446.3 L500,447.2 L229,448 Z" fill="#0f4e96"/><path d="M229,446 L523,444 L500,447.2 L229,448 Z" fill="#3a6fa8"/><path d="M523,438.6 L700,439.1 L900,440.6 L935,442.6" fill="none" stroke="#f0f0f0" stroke-width="1"/><path d="M229,448.2 L587,447.4" fill="none" stroke="#c8c8c8" stroke-width="1"/><path d="M587,447.3 L700,446.5 L900,445.2 L935,442.8" fill="none" stroke="#dde4ee" stroke-width="0.9"/><path d="M229,445.2 L519,443.2" stroke="#d8e6f6" stroke-width="1.1"/></g><rect x="256" y="519.5" width="20" height="20" fill="#3c74a8" stroke="#5aaef0" stroke-width="1.6"/><circle cx="256" cy="519.5" r="3" fill="#e8e8e8"/><circle cx="276" cy="519.5" r="3" fill="#e8e8e8"/><circle cx="256" cy="539.5" r="3" fill="#e8e8e8"/><circle cx="276" cy="539.5" r="3" fill="#e8e8e8"/><path d="M266,518 L266,505" stroke="#0a22e0" stroke-width="2.2"/><path d="M262.5,506 L266,500 L269.5,506 Z" fill="#0a22e0"/><path d="M278,529.5 L290,529.5" stroke="#d01010" stroke-width="2.2"/><path d="M289,526 L295,529.5 L289,533 Z" fill="#d01010"/><text x="264.5" y="497.5" font-family="Liberation Serif" font-size="9" fill="#ddd">Z</text><text x="297" y="531" font-family="Liberation Serif" font-size="9" fill="#ddd">X</text></svg>
<div class="a t" style="left:1313.5px;top:552.54px;font-size:11px;color:#fff;font-weight:normal;font-family:'Liberation Sans',sans-serif;letter-spacing:0.000px;line-height:normal;transform:scaleX(0.9764);transform-origin:0 0;">141.7&#32;x&#32;60.2&#32;mm</div>
<div class="a" style="left:229px;top:566px;width:1171px;height:4px;background:#f7f7f7"></div>
<div class="a" style="left:228px;top:570px;width:1172px;height:20px;background:linear-gradient(#b9c8da,#d0dcea)"></div>
<div class="a t" style="left:231px;top:573.54px;font-size:11px;color:#222;font-weight:normal;font-family:'Liberation Sans',sans-serif;letter-spacing:0.000px;line-height:normal;transform:scaleX(0.9993);transform-origin:0 0;">Output</div>
<svg style="left:1372px;top:574px" width="10" height="12"><path d="M2.5 1.5h5v5h1.5v1.5h-3v3h-1v-3h-3v-1.5h1.5z" fill="#111"/><rect x="4" y="2.5" width="1" height="4" fill="#aaa"/></svg>
<div class="a" style="left:1387px;top:575px;width:10px;height:10px;background:#cd5a40"></div>
<svg style="left:1387px;top:575px" width="10" height="10"><path d="M3 3l4 4M7 3l-4 4" stroke="#fff" stroke-width="1.3"/></svg>
<div class="a" style="left:228px;top:590px;width:1172px;height:1px;background:#eef1f5"></div>
<div class="a" style="left:228px;top:591px;width:1171px;height:113px;background:#fefefc;border:1px solid #b8b8b8;border-bottom:2px solid #9a9a9a"></div>
<div class="a" style="left:1383px;top:592px;width:15px;height:110px;background:#f0f0f0"></div>
<div class="a" style="left:1388px;top:672px;width:5px;height:16px;background:#8a8a8a"></div>
<div class="a t" style="left:241.5px;top:596.24px;font-size:11px;color:#222;font-weight:normal;font-family:'Liberation Mono',sans-serif;letter-spacing:-0.021px;line-height:normal;">shroud&#32;pass&#32;&#32;&#32;1-&#32;&#32;5</div>
<div class="a t" style="left:235px;top:611.47px;font-size:11px;color:#2020e0;font-weight:normal;font-family:'Liberation Mono',sans-serif;letter-spacing:-0.046px;line-height:normal;text-decoration:underline;text-decoration-color:#2020e0;text-decoration-skip-ink:none;text-underline-offset:2px">&#32;warning...tilting</div>
<div class="a t" style="left:241.5px;top:626.70px;font-size:11px;color:#222;font-weight:normal;font-family:'Liberation Mono',sans-serif;letter-spacing:-0.021px;line-height:normal;">shroud&#32;pass&#32;&#32;&#32;2-&#32;&#32;5</div>
<div class="a t" style="left:235px;top:641.93px;font-size:11px;color:#2020e0;font-weight:normal;font-family:'Liberation Mono',sans-serif;letter-spacing:-0.046px;line-height:normal;text-decoration:underline;text-decoration-color:#2020e0;text-decoration-skip-ink:none;text-underline-offset:2px">&#32;warning...tilting</div>
<div class="a t" style="left:241.5px;top:657.16px;font-size:11px;color:#222;font-weight:normal;font-family:'Liberation Mono',sans-serif;letter-spacing:-0.021px;line-height:normal;">shroud&#32;pass&#32;&#32;&#32;3-&#32;&#32;5</div>
<div class="a t" style="left:235px;top:672.39px;font-size:11px;color:#2020e0;font-weight:normal;font-family:'Liberation Mono',sans-serif;letter-spacing:-0.046px;line-height:normal;text-decoration:underline;text-decoration-color:#2020e0;text-decoration-skip-ink:none;text-underline-offset:2px">&#32;warning...tilting</div>
<div class="a t" style="left:241.5px;top:687.62px;font-size:11px;color:#222;font-weight:normal;font-family:'Liberation Mono',sans-serif;letter-spacing:-0.021px;line-height:normal;">MAX-PAC&#32;has&#32;completed&#32;with&#32;toolpath&#32;warning&#32;messages</div>
<div class="a" style="left:229px;top:704px;width:1171px;height:21px;background:#f9fafb"></div>
<div class="a" style="left:230px;top:705px;width:51px;height:19px;background:#f6f7f9"></div>
<div class="a" style="left:281px;top:705px;width:81px;height:19px;background:#eeeff2"></div>
<div class="a t" style="left:234.5px;top:708.54px;font-size:11px;color:#1a2a4a;font-weight:normal;font-family:'Liberation Sans',sans-serif;letter-spacing:0.000px;line-height:normal;transform:scaleX(0.8626);transform-origin:0 0;">Message</div>
<div class="a t" style="left:285.5px;top:708.54px;font-size:11px;color:#1a2a4a;font-weight:normal;font-family:'Liberation Sans',sans-serif;letter-spacing:0.000px;line-height:normal;transform:scaleX(0.9407);transform-origin:0 0;">Operation&#32;info</div>
<div class="a" style="left:0px;top:724px;width:1400px;height:20px;background:#f0f0f3"></div>
<div class="a" style="left:0px;top:724px;width:1400px;height:1px;background:#e4e4e8"></div>
<div class="a t" style="left:3px;top:729.54px;font-size:11px;color:#222;font-weight:normal;font-family:'Liberation Sans',sans-serif;letter-spacing:0.000px;line-height:normal;transform:scaleX(0.8673);transform-origin:0 0;">For&#32;Help,&#32;press&#32;F1</div>
<div class="a t" style="left:1324px;top:729.54px;font-size:11px;color:#9a9a9a;font-weight:normal;font-family:'Liberation Sans',sans-serif;letter-spacing:0.000px;line-height:normal;transform:scaleX(0.8401);transform-origin:0 0;">CAP</div>
<div class="a" style="left:1344px;top:727px;width:1px;height:16px;background:#dcdcdc"></div>
<div class="a t" style="left:1347px;top:729.54px;font-size:11px;color:#222;font-weight:normal;font-family:'Liberation Sans',sans-serif;letter-spacing:0.000px;line-height:normal;transform:scaleX(0.9581);transform-origin:0 0;">NUM</div>
<div class="a" style="left:1373px;top:727px;width:1px;height:16px;background:#dcdcdc"></div>
<div class="a t" style="left:1376px;top:729.54px;font-size:11px;color:#9a9a9a;font-weight:normal;font-family:'Liberation Sans',sans-serif;letter-spacing:0.000px;line-height:normal;transform:scaleX(0.7498);transform-origin:0 0;">SCRL</div>
<div class="a" style="left:64px;top:179px;width:170px;height:18px;background:#fbfbfb;border:1px solid #dadada;box-shadow:1px 1px 2px rgba(0,0,0,0.15)"></div>
<div class="a t" style="left:69px;top:181.24px;font-size:11px;color:#707070;font-weight:normal;font-family:'Liberation Sans',sans-serif;letter-spacing:0.000px;line-height:normal;transform:scaleX(0.9650);transform-origin:0 0;">2-1.&#32;SamOut.r12&#32;[exducer&#32;-&#32;finish]</div>
<svg style="left:130px;top:183px" width="10" height="16" viewBox="0 0 10 16"><path d="M0.5 0.5v12l3-3l2.2 5l1.8-0.8l-2.2-5h4z" fill="#fff" stroke="#555" stroke-width="0.9"/></svg>
</body></html>
